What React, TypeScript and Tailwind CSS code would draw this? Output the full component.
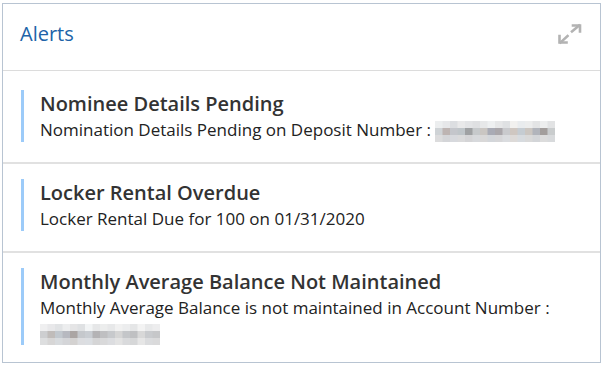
import React from "react";

const palette1 = [
  ["#eceeef", "#e6e7e9", "#dcdee1", "#e9e9ea", "#e3e4e6", "#dfe0e2", "#e7e8e9", "#eef0f1", "#e6e7e8", "#dfe1e3", "#f2f1ef", "#e9ecee", "#eceded", "#e3e4e5", "#edeeee", "#e2e3e4"],
  ["#cfd3d6", "#bdb4b2", "#c4c6cb", "#bfc5c9", "#9fa1a3", "#c6c9cb", "#cac6c2", "#a9abb5", "#aaa7ab", "#c9cacd", "#cfc7c1", "#c5ccd2", "#cbc6c1", "#b1b4bb", "#a39e9c", "#c9cccd"],
  ["#dcdcdd", "#d4d5d8", "#d7d9dd", "#dadadb", "#d4d4d6", "#d7d9dc", "#d9d8d8", "#d3d6da", "#d6d6d8", "#dadcdf", "#dddad8", "#d7dbdf", "#d9d9d9", "#d3d5d8", "#dcdcdc", "#d8dadc"],
];

const palette2 = [
  ["#efeff0", "#e8e8ea", "#e1e3e5", "#ecedee", "#e5e5e6", "#dfe1e3", "#f2f4f5", "#e6e7e8", "#eceded", "#e7e8e9", "#f1f1f1", "#ecedee", "#e5e6e7", "#f3f3f3", "#e8e9ea", "#ededee"],
  ["#cdced0", "#c0bcba", "#c2c8ce", "#b7b9c0", "#aba5a3", "#c5c8cc", "#c9cdd2", "#b4b3b5", "#bfbfc1", "#c7c9cc", "#d5d5d5", "#c4c6c9", "#bfc0c2", "#d8d8d8", "#c9cbce", "#c6c7c9"],
  ["#dddedf", "#d7d6d6", "#d8dbde", "#d4d5d8", "#d4d2d1", "#dcdde0", "#dbdee2", "#d5d5d6", "#d9d9da", "#dcdde0", "#e3e3e3", "#d9dadc", "#d6d7d8", "#e6e6e6", "#dbdcde", "#dadadb"],
];

function Mosaic({ rows }: { rows: string[][] }) {
  const cw = 7.5;
  const ch = 7;
  return (
    <svg width={120} height={21} viewBox="0 0 120 21" className="inline-block align-middle">
      {rows.map((r, i) =>
        r.map((c, j) => (
          <rect key={`${i}-${j}`} x={j * cw} y={i * ch} width={cw + 0.5} height={ch} fill={c} />
        ))
      )}
    </svg>
  );
}

function ExpandIcon() {
  return (
    <svg width="26" height="22" viewBox="0 0 26 22" fill="none" stroke="#b3b3b3" strokeWidth="2.6" strokeLinecap="square">
      <path d="M15 8.5 L22 2.5" />
      <path d="M16 2.5 H23 V8.5" />
      <path d="M10.5 13 L3.5 19.5" />
      <path d="M2.5 13 V19.5 H9.5" />
    </svg>
  );
}

function Item({
  title,
  children,
  first,
  last,
}: {
  title: string;
  children: React.ReactNode;
  first?: boolean;
  last?: boolean;
}) {
  return (
    <div
      className={`${first ? "pt-[19px]" : "pt-[15px]"} ${last ? "pb-[17px]" : "pb-[20px] border-b-2 border-[#e1e1e1]"} pl-[18px] pr-4`}
    >
      <div className="border-l-[3px] border-[#9ccbf9] pl-[16px]">
        <div className="text-[20px] leading-[27px] font-semibold text-[#333333]">{title}</div>
        <div className="text-[17px] leading-[25px] text-[#222222]">{children}</div>
      </div>
    </div>
  );
}

export default function App() {
  return (
    <div className="w-[603px] h-[367px] bg-white pt-[3px] px-[2px]" style={{ fontFamily: '"Open Sans", "Noto Sans", sans-serif' }}>
      <div className="border border-[#b8c4d2] bg-white">
        <div className="h-[67px] flex items-center justify-between pl-[17px] pr-[17px] pb-[6px] border-b border-[#dcdcdc]">
          <div className="text-[20px] text-[#2063a8]">Alerts</div>
          <ExpandIcon />
        </div>
        <Item title="Nominee Details Pending" first>
          Nomination Details Pending on Deposit Number : <Mosaic rows={palette1} />
        </Item>
        <Item title="Locker Rental Overdue">Locker Rental Due for 100 on 01/31/2020</Item>
        <Item title="Monthly Average Balance Not Maintained" last>
          Monthly Average Balance is not maintained in Account Number :
          <br />
          <Mosaic rows={palette2} />
        </Item>
      </div>
    </div>
  );
}
